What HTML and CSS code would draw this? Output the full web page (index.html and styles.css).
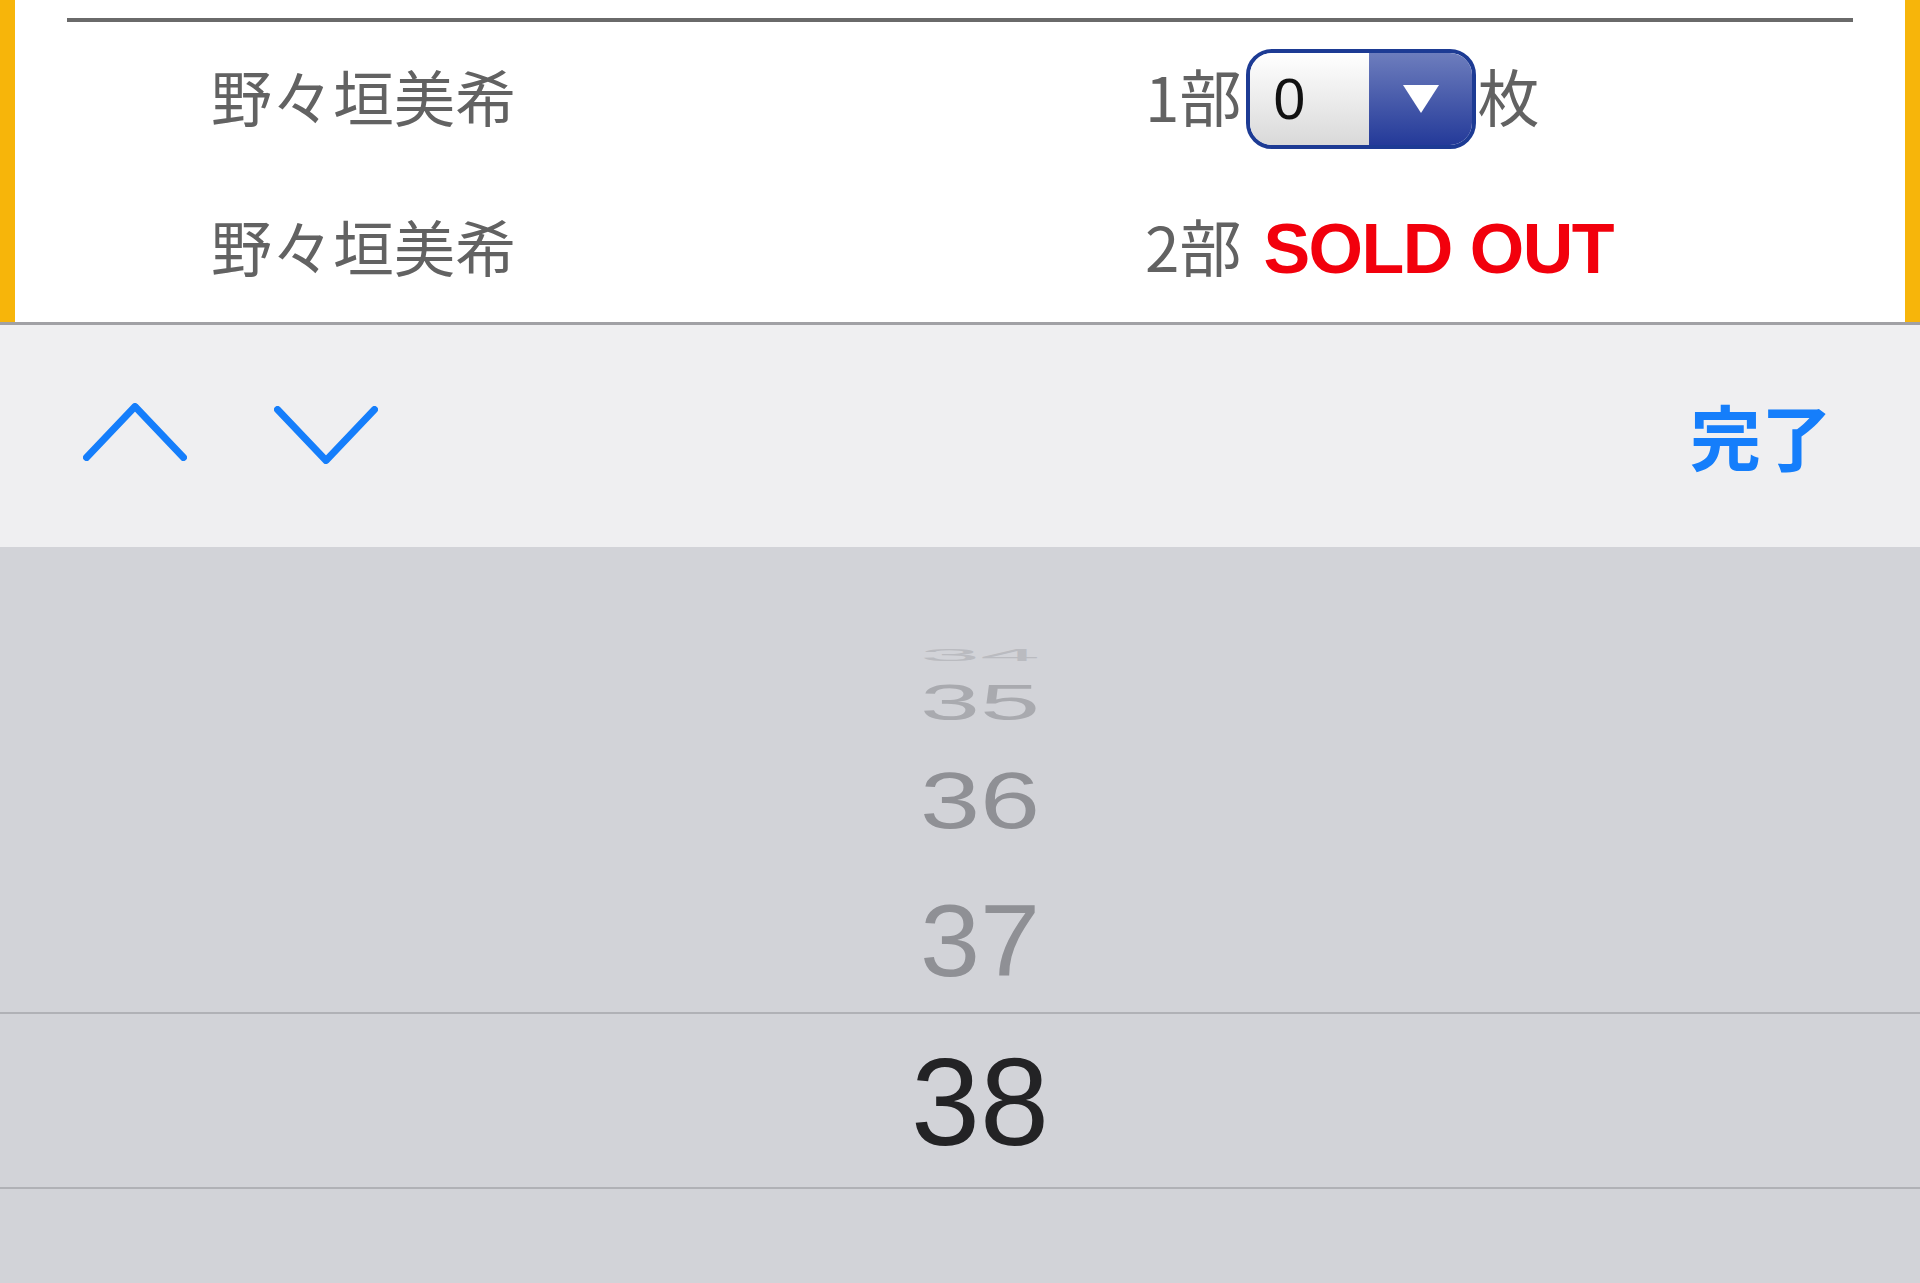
FILE: index.html
```html
<!DOCTYPE html>
<html lang="ja">
<head>
    <meta charset="UTF-8">
    <meta name="viewport" content="width=device-width, initial-scale=1.0">
    <title>チケット枚数選択</title>
    <link rel="stylesheet" href="styles.css">
</head>
<body>
    <div class="page">
        <div class="panel">
            <div class="ticket-list">
                <div class="ticket-row row-first">
                    <span class="member">野々垣美希</span>
                    <span class="slot">
                        <span class="part">1部</span>
                        <span class="select-box">
                            <span class="select-value">0</span>
                            <span class="select-arrow"></span>
                        </span>
                        <span class="unit">枚</span>
                    </span>
                </div>
                <div class="ticket-row row-second">
                    <span class="member">野々垣美希</span>
                    <span class="slot">
                        <span class="part">2部</span>
                        <span class="sold-out">SOLD OUT</span>
                    </span>
                </div>
            </div>
        </div>
    </div>

    <!-- keyboard accessory bar -->
    <div class="accessory">
        <div class="nav-arrows">
            <svg class="chevron" width="104" height="58" viewBox="0 0 104 58">
                <path d="M3.5 54.5 L52 3.5 L100.5 54.5" />
            </svg>
            <svg class="chevron chevron-down" width="104" height="58" viewBox="0 0 104 58">
                <path d="M3.5 3.5 L52 54.5 L100.5 3.5" />
            </svg>
        </div>
        <span class="done">完了</span>
    </div>

    <!-- number wheel -->
    <div class="picker">
        <div class="wheel-item item-34"><span>34</span></div>
        <div class="wheel-item item-35"><span>35</span></div>
        <div class="wheel-item item-36"><span>36</span></div>
        <div class="wheel-item item-37"><span>37</span></div>
        <div class="lens"><span>38</span></div>
    </div>
</body>
</html>
```

FILE: styles.css
```css
body {
    margin: 0;
    background-color: #d2d3d8;
    font-family: "Noto Sans CJK JP", "Noto Sans", sans-serif;
}

.page {
    height: 322px;
    padding: 0 15px;
    background-color: #f7b50a;
}

.panel {
    height: 100%;
    padding-top: 18px;
    box-sizing: border-box;
    background-color: #fff;
}

.ticket-list {
    margin: 0 52px;
    border-top: 4px solid #6a6a6a;
}

.ticket-row {
    display: flex;
    align-items: center;
    padding-left: 144px;
    color: #626262;
    line-height: 1;
}

.row-first {
    height: 154px;
}

.row-second {
    height: 146px;
}

.member {
    width: 934px;
    flex-shrink: 0;
    margin-top: -8px;
    font-size: 61px;
}

.slot {
    display: flex;
    align-items: center;
    font-size: 62px;
}

.part,
.unit {
    margin-top: -8px;
}

.select-box {
    display: flex;
    width: 230px;
    height: 100px;
    margin: 0 1px 0 5px;
    border: 4px solid #1d3b94;
    border-radius: 26px;
    box-sizing: border-box;
    overflow: hidden;
}

.select-value {
    display: flex;
    align-items: center;
    width: 119px;
    padding-left: 23px;
    box-sizing: border-box;
    background: linear-gradient(#ffffff, #d9d9d9);
    color: #111;
    font-family: "Liberation Sans", Arial, sans-serif;
    font-size: 57px;
}

.select-arrow {
    flex: 1;
    display: flex;
    align-items: center;
    justify-content: center;
    background: linear-gradient(#6d7dbd, #243a99);
}

.select-arrow::after {
    content: "";
    border-left: 18px solid transparent;
    border-right: 18px solid transparent;
    border-top: 28px solid #fff;
}

.sold-out {
    margin-left: 22px;
    color: #f2000c;
    font-family: "Liberation Sans", Arial, sans-serif;
    font-weight: bold;
    font-size: 70px;
    letter-spacing: -1.5px;
}

.accessory {
    display: flex;
    align-items: center;
    justify-content: space-between;
    height: 222px;
    padding: 0 88px 0 83px;
    border-top: 3px solid #a1a1a5;
    background-color: #efeff1;
}

.nav-arrows {
    display: flex;
    align-items: center;
    gap: 87px;
    margin-top: -8px;
}

.chevron path {
    fill: none;
    stroke: #157efb;
    stroke-width: 7;
    stroke-linecap: round;
    stroke-linejoin: round;
}

.chevron-down {
    margin-top: 6px;
}

.done {
    color: #157efb;
    font-size: 71px;
    font-weight: bold;
    line-height: 1;
    margin-top: -3px;
}

.picker {
    height: 736px;
    padding-top: 93px;
    box-sizing: border-box;
    padding-left: 40px;
    font-family: "Liberation Sans", Arial, sans-serif;
    line-height: 1;
}

.wheel-item {
    display: flex;
    align-items: center;
    justify-content: center;
    font-size: 108px;
    color: #8f9095;
}

.item-34 {
    height: 30px;
    color: #babbc0;
}

.item-34 span {
    transform: scaleY(0.16);
}

.item-35 {
    height: 66px;
    color: #a9aaaf;
}

.item-35 span {
    transform: scaleY(0.46);
}

.item-36 {
    height: 130px;
}

.item-36 span {
    transform: scaleY(0.74);
}

.item-37 {
    height: 146px;
    padding-top: 4px;
    box-sizing: border-box;
}

.item-37 span {
    transform: scaleY(0.94);
}

.lens {
    display: flex;
    align-items: center;
    justify-content: center;
    height: 177px;
    border-top: 2px solid #b0b1b6;
    border-bottom: 2px solid #b0b1b6;
    box-sizing: border-box;
    margin-left: -40px;
    padding-left: 40px;
    padding-top: 2px;
    color: #232325;
    font-size: 124px;
}
```
